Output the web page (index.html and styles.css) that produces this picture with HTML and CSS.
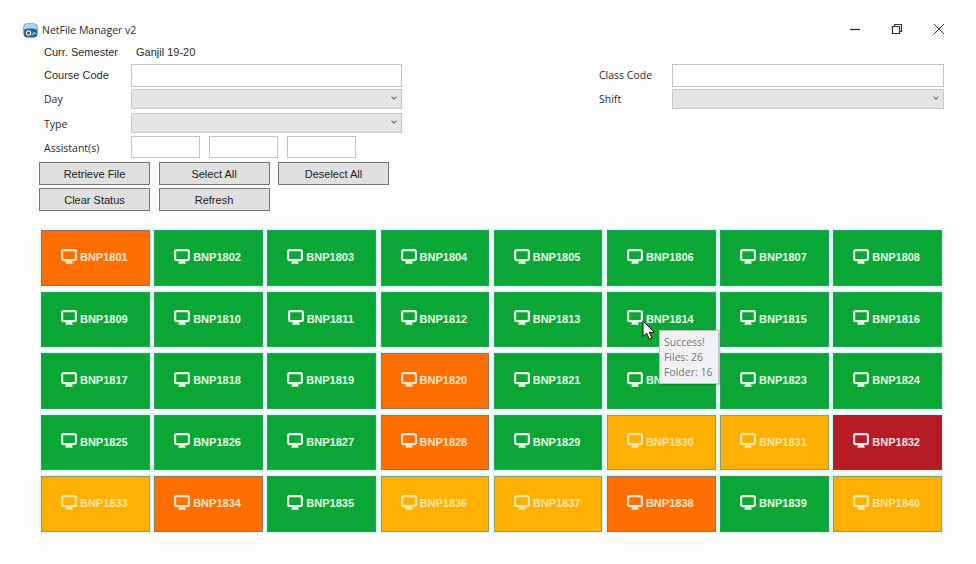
FILE: index.html
```html
<!DOCTYPE html>
<html lang="en">

<head>
    <meta charset="UTF-8">
    <meta name="viewport" content="width=device-width, initial-scale=1.0">
    <title>NetFile Manager v2</title>
    <link rel="stylesheet" href="styles.css">
</head>

<body>
    <svg class="defs" width="0" height="0">
        <symbol id="monitor" viewBox="0 0 16 15">
            <rect x="1.100" y="1.100" width="13.800" height="10" rx="1.600" fill="none" stroke="currentColor" stroke-width="2.200"/>
            <path d="M5.200 12h5.600l1 2.800H4.200z" fill="currentColor"/>
        </symbol>
    </svg>

    <div class="titlebar">
        <svg class="app-icon" width="15" height="15" viewBox="0 0 15 15">
            <rect x="0.500" y="0.500" width="14" height="14" rx="4" fill="#2a5f8f"/>
            <path d="M1 6.500C4 5 11 5 14 6.500V4A3 3 0 0 0 11 1H4A3 3 0 0 0 1 4z" fill="#a9d4ee"/>
            <circle cx="5.500" cy="10" r="2.200" fill="none" stroke="#e6f2fa" stroke-width="1.200"/>
            <path d="M9 12.500l2-3 2 1.500" fill="none" stroke="#9fd0ee" stroke-width="1.200"/>
        </svg>
        <span class="app-title">NetFile Manager v2</span>
        <div class="win-controls">
            <svg width="12" height="12" viewBox="0 0 12 12"><path d="M1 6.500h10" stroke="#333" stroke-width="1.300"/></svg>
            <svg width="12" height="12" viewBox="0 0 12 12"><path d="M1.500 3.500h7v7h-7zM3.500 3.500v-2h7v7h-2" fill="none" stroke="#333" stroke-width="1.200"/></svg>
            <svg width="12" height="12" viewBox="0 0 12 12"><path d="M1 1l10 10M11 1L1 11" stroke="#333" stroke-width="1"/></svg>
        </div>
    </div>

    <div class="form-area">
        <div class="form-left">
            <div class="row row-semester">
                <span class="label label-arial">Curr. Semester</span>
                <span class="semester-value">Ganjil 19-20</span>
            </div>
            <div class="row row-text">
                <label class="label label-arial">Course Code</label>
                <input class="field" type="text">
            </div>
            <div class="row row-select">
                <label class="label">Day</label>
                <div class="combo"><span class="chevron"></span></div>
            </div>
            <div class="row row-select">
                <label class="label label-low">Type</label>
                <div class="combo"><span class="chevron"></span></div>
            </div>
            <div class="row row-assist">
                <label class="label label-low">Assistant(s)</label>
                <div class="assist-inputs">
                    <input class="field" type="text">
                    <input class="field" type="text">
                    <input class="field" type="text">
                </div>
            </div>
            <div class="buttons">
                <button class="btn">Retrieve File</button>
                <button class="btn">Select All</button>
                <button class="btn">Deselect All</button>
                <button class="btn">Clear Status</button>
                <button class="btn">Refresh</button>
            </div>
        </div>
        <div class="form-right">
            <div class="row row-text">
                <label class="label label-short">Class Code</label>
                <input class="field" type="text">
            </div>
            <div class="row row-select">
                <label class="label label-short">Shift</label>
                <div class="combo"><span class="chevron"></span></div>
            </div>
        </div>
    </div>

    <div class="lab-grid">
        <div class="pc orange"><svg class="pc-icon"><use href="#monitor"/></svg>BNP1801</div>
        <div class="pc green"><svg class="pc-icon"><use href="#monitor"/></svg>BNP1802</div>
        <div class="pc green"><svg class="pc-icon"><use href="#monitor"/></svg>BNP1803</div>
        <div class="pc green"><svg class="pc-icon"><use href="#monitor"/></svg>BNP1804</div>
        <div class="pc green"><svg class="pc-icon"><use href="#monitor"/></svg>BNP1805</div>
        <div class="pc green"><svg class="pc-icon"><use href="#monitor"/></svg>BNP1806</div>
        <div class="pc green"><svg class="pc-icon"><use href="#monitor"/></svg>BNP1807</div>
        <div class="pc green"><svg class="pc-icon"><use href="#monitor"/></svg>BNP1808</div>

        <div class="pc green"><svg class="pc-icon"><use href="#monitor"/></svg>BNP1809</div>
        <div class="pc green"><svg class="pc-icon"><use href="#monitor"/></svg>BNP1810</div>
        <div class="pc green"><svg class="pc-icon"><use href="#monitor"/></svg>BNP1811</div>
        <div class="pc green"><svg class="pc-icon"><use href="#monitor"/></svg>BNP1812</div>
        <div class="pc green"><svg class="pc-icon"><use href="#monitor"/></svg>BNP1813</div>
        <div class="pc green hovered"><svg class="pc-icon"><use href="#monitor"/></svg>BNP1814
            <svg class="cursor" width="14" height="21" viewBox="0 0 14 21">
                <path d="M1 1v15.500l3.700-3.300 2.500 6 2.600-1.100-2.500-5.800h5z" fill="#fff" stroke="#111" stroke-width="1"/>
            </svg>
            <div class="tooltip">Success!<br>Files: 26<br>Folder: 16</div>
        </div>
        <div class="pc green"><svg class="pc-icon"><use href="#monitor"/></svg>BNP1815</div>
        <div class="pc green"><svg class="pc-icon"><use href="#monitor"/></svg>BNP1816</div>

        <div class="pc green"><svg class="pc-icon"><use href="#monitor"/></svg>BNP1817</div>
        <div class="pc green"><svg class="pc-icon"><use href="#monitor"/></svg>BNP1818</div>
        <div class="pc green"><svg class="pc-icon"><use href="#monitor"/></svg>BNP1819</div>
        <div class="pc orange"><svg class="pc-icon"><use href="#monitor"/></svg>BNP1820</div>
        <div class="pc green"><svg class="pc-icon"><use href="#monitor"/></svg>BNP1821</div>
        <div class="pc green"><svg class="pc-icon"><use href="#monitor"/></svg>BNP1822</div>
        <div class="pc green"><svg class="pc-icon"><use href="#monitor"/></svg>BNP1823</div>
        <div class="pc green"><svg class="pc-icon"><use href="#monitor"/></svg>BNP1824</div>

        <div class="pc green"><svg class="pc-icon"><use href="#monitor"/></svg>BNP1825</div>
        <div class="pc green"><svg class="pc-icon"><use href="#monitor"/></svg>BNP1826</div>
        <div class="pc green"><svg class="pc-icon"><use href="#monitor"/></svg>BNP1827</div>
        <div class="pc orange"><svg class="pc-icon"><use href="#monitor"/></svg>BNP1828</div>
        <div class="pc green"><svg class="pc-icon"><use href="#monitor"/></svg>BNP1829</div>
        <div class="pc amber"><svg class="pc-icon"><use href="#monitor"/></svg>BNP1830</div>
        <div class="pc amber"><svg class="pc-icon"><use href="#monitor"/></svg>BNP1831</div>
        <div class="pc red"><svg class="pc-icon"><use href="#monitor"/></svg>BNP1832</div>

        <div class="pc amber"><svg class="pc-icon"><use href="#monitor"/></svg>BNP1833</div>
        <div class="pc orange"><svg class="pc-icon"><use href="#monitor"/></svg>BNP1834</div>
        <div class="pc green"><svg class="pc-icon"><use href="#monitor"/></svg>BNP1835</div>
        <div class="pc amber"><svg class="pc-icon"><use href="#monitor"/></svg>BNP1836</div>
        <div class="pc amber"><svg class="pc-icon"><use href="#monitor"/></svg>BNP1837</div>
        <div class="pc orange"><svg class="pc-icon"><use href="#monitor"/></svg>BNP1838</div>
        <div class="pc green"><svg class="pc-icon"><use href="#monitor"/></svg>BNP1839</div>
        <div class="pc amber"><svg class="pc-icon"><use href="#monitor"/></svg>BNP1840</div>
    </div>
</body>

</html>
```

FILE: styles.css
```css
body {
    margin: 0;
    height: 564px;
    overflow: hidden;
    background-color: #fefefe;
    color: #2b2b2b;
    font-family: "Open Sans", sans-serif;
    font-size: 10.5px;
}

.defs {
    position: absolute;
}

.titlebar {
    display: flex;
    align-items: center;
    height: 20px;
    padding: 20px 31px 2px 23px;
}

.app-icon {
    margin-right: 4px;
}

.app-title {
    font-size: 10.5px;
}

.win-controls {
    display: flex;
    gap: 30px;
    margin-left: auto;
    margin-top: -2px;
}

.form-area {
    display: flex;
    justify-content: space-between;
    padding: 0 32px 0 44px;
}

.form-left {
    width: 358px;
}

.form-right {
    width: 345px;
    padding-top: 22px;
}

.row {
    display: flex;
    align-items: center;
}

.row-semester {
    height: 20px;
    margin-bottom: 2px;
}

.row-text {
    height: 23px;
    margin-bottom: 2px;
}

.row-text .label {
    padding-bottom: 2px;
}

.row-select {
    height: 20px;
    margin-bottom: 4px;
}

.row-assist {
    height: 22px;
    margin-top: -1px;
    margin-bottom: 4px;
}

.label {
    flex: none;
    width: 87px;
}

.label-low {
    padding-top: 2px;
}

.label-arial {
    font-family: "Liberation Sans", sans-serif;
    font-size: 11px;
}

.label-short {
    width: 73px;
}

.semester-value {
    font-family: "Liberation Sans", sans-serif;
    font-size: 11px;
    margin-left: 5px;
}

.field {
    flex: 1;
    min-width: 0;
    height: 100%;
    box-sizing: border-box;
    border: 1px solid #c4c4c4;
    background: white;
    padding: 0;
}

.combo {
    flex: 1;
    height: 100%;
    box-sizing: border-box;
    border: 1px solid #c8c8c8;
    background: #e4e4e4;
    position: relative;
}

.chevron {
    position: absolute;
    right: 5px;
    top: 5px;
    width: 3px;
    height: 3px;
    border-right: 1px solid #666;
    border-bottom: 1px solid #666;
    transform: rotate(45deg);
}

.assist-inputs {
    display: flex;
    gap: 9px;
}

.assist-inputs .field {
    flex: none;
    width: 69px;
    height: 22px;
}

.buttons {
    display: grid;
    grid-template-columns: repeat(3, 111px);
    grid-auto-rows: 23px;
    column-gap: 8.500px;
    row-gap: 3px;
    margin-left: -5px;
}

.btn {
    border: 1px solid #777;
    background: #e0e0e0;
    color: #222;
    font-family: "Liberation Sans", sans-serif;
    font-size: 11px;
    padding: 0;
}

.lab-grid {
    display: grid;
    grid-template-columns: repeat(8, 1fr);
    grid-auto-rows: 55.500px;
    gap: 6px 4.500px;
    width: 901px;
    margin: 19px 0 0 41px;
}

.pc {
    display: flex;
    align-items: center;
    justify-content: center;
    gap: 3px;
    position: relative;
    box-sizing: border-box;
    padding: 0 2px 1px 0;
    font-family: "Liberation Sans", sans-serif;
    font-size: 11px;
    font-weight: bold;
    box-shadow: 0 0 0 1.500px #d8f6f6;
}

.pc-icon {
    width: 16px;
    height: 15px;
    margin-top: -2px;
}

.green {
    background: #0aa737;
    border: 1px solid #2ba05c;
    color: #e9fbe6;
}

.orange {
    background: #ff6f00;
    border: 1px solid #8f7764;
    color: #ffe6cc;
}

.amber {
    background: #ffb000;
    border: 1px solid #8fa06c;
    color: #ffe7a6;
}

.red {
    background: #b71c24;
    border: 1px solid #6c3a60;
    color: #fbe3e4;
}

.hovered {
    z-index: 1;
}

.cursor {
    position: absolute;
    left: 34px;
    top: 27px;
}

.tooltip {
    position: absolute;
    left: 51px;
    top: 37px;
    width: 60px;
    height: 54px;
    box-sizing: border-box;
    padding: 4px 0 0 4px;
    background: #f1f1f5;
    border: 1px solid #c2c2c6;
    box-shadow: 1px 1px 2px rgba(0, 0, 0, 0.25);
    color: #767676;
    font-family: "Open Sans", sans-serif;
    font-size: 10.500px;
    font-weight: normal;
    line-height: 15px;
}
```
